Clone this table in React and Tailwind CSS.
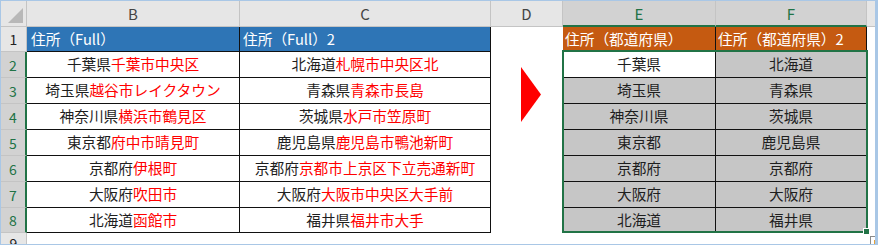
const rows = [
  { b: ["千葉県", "千葉市中央区"], c: ["北海道", "札幌市中央区北"], e: "千葉県", f: "北海道" },
  { b: ["埼玉県", "越谷市レイクタウン"], c: ["青森県", "青森市長島"], e: "埼玉県", f: "青森県" },
  { b: ["神奈川県", "横浜市鶴見区"], c: ["茨城県", "水戸市笠原町"], e: "神奈川県", f: "茨城県" },
  { b: ["東京都", "府中市晴見町"], c: ["鹿児島県", "鹿児島市鴨池新町"], e: "東京都", f: "鹿児島県" },
  { b: ["京都府", "伊根町"], c: ["京都府", "京都市上京区下立売通新町"], e: "京都府", f: "京都府" },
  { b: ["大阪府", "吹田市"], c: ["大阪府", "大阪市中央区大手前"], e: "大阪府", f: "大阪府" },
  { b: ["北海道", "函館市"], c: ["福井県", "福井市大手"], e: "北海道", f: "福井県" },
];

const Addr = ({ parts }) => (
  <span>
    <span className="text-[#1e1e1e]">{parts[0]}</span>
    <span className="text-[#ff0000]">{parts[1]}</span>
  </span>
);

const ColHead = ({ label, selected }) => (
  <div
    className={`flex items-center justify-center border-r border-[#c4c4c4] text-[15px] ${
      selected
        ? "bg-[#d2d2d2] text-[#217346] border-b-2 border-b-[#217346]"
        : "bg-[#e6e6e6] text-[#444] border-b border-b-[#c4c4c4]"
    }`}
  >
    {label}
  </div>
);

const RowHead = ({ n, selected }) => (
  <div
    className={`flex items-center justify-center border-b border-[#c4c4c4] text-[14px] ${
      selected
        ? "bg-[#d2d2d2] text-[#217346] border-r-2 border-r-[#217346]"
        : "bg-[#e6e6e6] text-[#222] border-r"
    }`}
  >
    {n}
  </div>
);

export default function App() {
  return (
    <div className="relative w-[878px] h-[245px] overflow-hidden bg-white border-t border-l border-b border-r-[3px] border-[#a9c7e6] font-['Noto_Sans_CJK_JP','Noto_Sans',sans-serif] leading-none">
      <div className="grid grid-cols-[26px_213px_251px_72px_153px_151px_8px] grid-rows-[26px_25px_26px_26px_26px_26px_26px_26px_25px_11px]">
        {/* D column spans rows 1-9, holds the arrow */}
        <div className="col-start-4 row-start-2 row-end-11 bg-white">
          <svg width="20" height="55" viewBox="0 0 20 55" className="mt-[40px] ml-[30px]">
            <polygon points="0,0 20,27.5 0,55" fill="#ff0000" />
          </svg>
        </div>

        {/* column headers */}
        <div className="col-start-1 row-start-1 bg-[#e6e6e6] border-r border-b border-[#c4c4c4] relative">
          <svg width="26" height="26" className="absolute left-0 top-0">
            <polygon points="22,7 22,22 7,22" fill="#b8b8b8" />
          </svg>
        </div>
        <ColHead label="B" />
        <ColHead label="C" />
        <ColHead label="D" />
        <ColHead label="E" selected />
        <ColHead label="F" selected />
        <div className="bg-[#e6e6e6] border-b border-[#c4c4c4]" />

        {/* row 1 */}
        <RowHead n="1" />
        <div className="flex items-center pl-[4px] bg-[#2e75b6] text-white text-[14.7px] border-r border-b border-[#111]">
          住所（Full）
        </div>
        <div className="flex items-center pl-[3px] bg-[#2e75b6] text-white text-[14.7px] border-r border-b border-[#111]">
          住所（Full）2
        </div>
        <div className="flex items-center pl-[2px] bg-[#c55a11] text-white text-[14.7px] border-r border-b border-[#111]">
          住所（都道府県）
        </div>
        <div className="flex items-center pl-[2px] bg-[#c55a11] text-white text-[14.7px] border-r border-b border-[#111]">
          住所（都道府県）2
        </div>
        <div />

        {/* rows 2-8 */}
        {rows.map((r, i) => (
          <div key={i} className="contents">
            <RowHead n={String(i + 2)} selected />
            <div className="flex items-center justify-center text-[14.7px] border-r border-b border-[#111]">
              <Addr parts={r.b} />
            </div>
            <div className="flex items-center justify-center text-[14.7px] border-r border-b border-[#111]">
              <Addr parts={r.c} />
            </div>
            <div
              className={`flex items-center justify-center text-[14.7px] text-[#1e1e1e] border-r border-b border-[#111] ${
                i === 0 ? "bg-white" : "bg-[#c6c6c6]"
              }`}
            >
              {r.e}
            </div>
            <div className="flex items-center justify-center text-[14.7px] text-[#1e1e1e] bg-[#c6c6c6] border-r border-b border-[#111]">
              {r.f}
            </div>
            <div />
          </div>
        ))}

        {/* row 9 */}
        <div className="bg-[#e6e6e6] border-r border-[#c4c4c4] overflow-hidden flex justify-center pt-[3px] text-[14px] text-[#222]">
          9
        </div>
      </div>

      {/* selection outline over E2:F8 */}
      <div className="absolute left-[561px] top-[49px] w-[306px] h-[183px] border-2 border-[#217346] pointer-events-none" />
      <div className="absolute left-[862px] top-[227px] w-[7px] h-[7px] bg-[#217346] border border-white" />

      {/* quick analysis tag */}
      <div className="absolute left-[869px] top-[235px] w-[10px] h-[10px] bg-white border border-[#8a8a8a]">
        <div className="absolute left-[3px] top-[3px] w-[4px] h-[4px] bg-[#e8a23a]" />
      </div>
    </div>
  );
}
